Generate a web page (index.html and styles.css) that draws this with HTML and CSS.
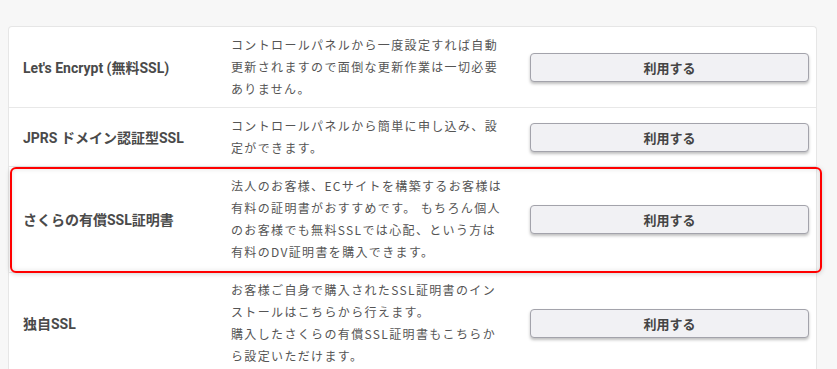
FILE: index.html
```html
<!DOCTYPE html>
<html lang="ja">
<head>
<meta charset="utf-8">
<link rel="stylesheet" href="styles.css">
</head>
<body>
<div class="card">
  <div class="row">
    <div class="label">Let's Encrypt (無料SSL)</div>
    <div class="desc">コントロールパネルから一度設定すれば自動更新されますので面倒な更新作業は一切必要ありません。</div>
    <div class="action"><button class="btn">利用する</button></div>
  </div>
  <div class="row">
    <div class="label">JPRS ドメイン認証型SSL</div>
    <div class="desc">コントロールパネルから簡単に申し込み、設定ができます。</div>
    <div class="action"><button class="btn">利用する</button></div>
  </div>
  <div class="row highlight">
    <div class="label">さくらの有償SSL証明書</div>
    <div class="desc">法人のお客様、ECサイトを構築するお客様は有料の証明書がおすすめです。 もちろん個人のお客様でも無料SSLでは心配、という方は有料のDV証明書を購入できます。</div>
    <div class="action"><button class="btn">利用する</button></div>
  </div>
  <div class="row last">
    <div class="label">独自SSL</div>
    <div class="desc">お客様ご自身で購入されたSSL証明書のインストールはこちらから行えます。<br>購入したさくらの有償SSL証明書もこちらから設定いただけます。</div>
    <div class="action"><button class="btn">利用する</button></div>
  </div>
</div>
</body>
</html>
```

FILE: styles.css
```css
html, body {
  margin: 0;
  padding: 0;
  background: #f7f7f7;
}
body {
  padding: 26px 20px 0 8px;
  font-family: Roboto, "Noto Sans CJK JP", sans-serif;
  color: #4a4a4a;
}
.card {
  background: #fff;
  border: 1px solid #e6e6e6;
  border-bottom: none;
  border-radius: 4px 4px 0 0;
  width: 807px;
}
.row {
  position: relative;
  display: grid;
  grid-template-columns: 208px 272px 1fr;
  align-items: center;
  padding: 7px 7px 7px 14px;
  border-bottom: 1px solid #e8e8e8;
}
.row.highlight {
  padding-top: 8px;
  padding-bottom: 9px;
}
.row.last {
  padding-top: 6px;
}
.label {
  font-size: 14px;
  font-weight: 700;
  color: #4a4a4a;
}
.desc {
  font-family: "Noto Sans CJK JP", Roboto, sans-serif;
  font-size: 12px;
  line-height: 22px;
  letter-spacing: 1.35px;
  color: #555;
}
.action {
  display: flex;
  justify-content: flex-end;
}
.btn {
  width: 279px;
  height: 29px;
  background: #f1f1f4;
  border: 1px solid #a3a3ab;
  border-radius: 4px;
  box-shadow: 0 2px 3px rgba(0, 0, 0, 0.25);
  font-family: Roboto, "Noto Sans CJK JP", sans-serif;
  font-size: 13px;
  font-weight: 700;
  color: #444;
  padding: 0;
}
.highlight::after {
  content: "";
  position: absolute;
  left: 1px;
  right: -6px;
  top: 0;
  bottom: -1px;
  border: 2px solid #ff0000;
  border-radius: 6px;
  box-shadow: 0 1px 5px rgba(0, 0, 0, 0.18), inset 0 0 5px rgba(0, 0, 0, 0.12);
  pointer-events: none;
}
```
